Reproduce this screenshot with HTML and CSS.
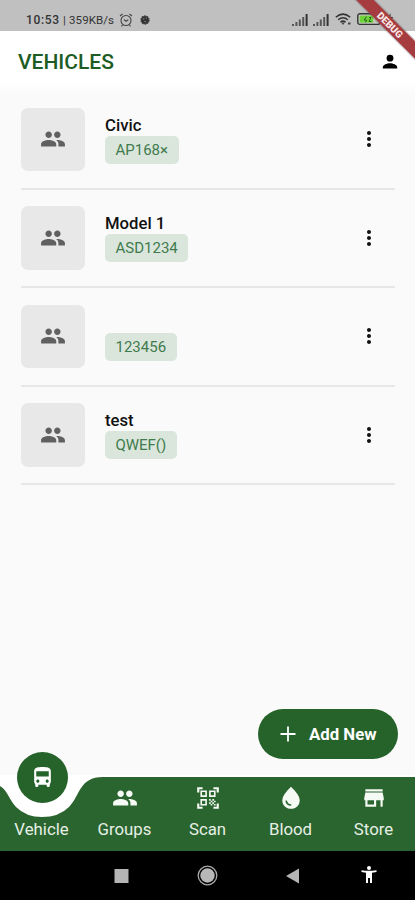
FILE: index.html
```html
<!DOCTYPE html>
<html lang="en">
<head>
<meta charset="utf-8">
<title>Vehicles</title>
<link rel="stylesheet" href="styles.css">
</head>
<body>
<svg class="defs" width="0" height="0">
  <symbol id="people" viewBox="0 0 24 24"><path d="M16 11c1.66 0 2.99-1.34 2.99-3S17.66 5 16 5c-1.66 0-3 1.34-3 3s1.34 3 3 3zm-8 0c1.66 0 2.99-1.34 2.99-3S9.66 5 8 5C6.34 5 5 6.34 5 8s1.34 3 3 3zm0 2c-2.33 0-7 1.17-7 3.5V19h14v-2.5c0-2.33-4.67-3.5-7-3.5zm8 0c-.29 0-.62.02-.97.05 1.16.84 1.97 1.97 1.97 3.45V19h6v-2.5c0-2.33-4.67-3.5-7-3.5z"/></symbol>
  <symbol id="more" viewBox="0 0 24 24"><path d="M12 8c1.1 0 2-.9 2-2s-.9-2-2-2-2 .9-2 2 .9 2 2 2zm0 2c-1.1 0-2 .9-2 2s.9 2 2 2 2-.9 2-2-.9-2-2-2zm0 6c-1.1 0-2 .9-2 2s.9 2 2 2 2-.9 2-2-.9-2-2-2z"/></symbol>
  <symbol id="signal" viewBox="0 0 16 12"><path d="M0 10h2v2H0zM3.4 8h2v4h-2zM6.8 5.5h2V12h-2z" opacity=".75"/><path d="M10.2 3h2v9h-2z" opacity=".75"/><path d="M13.6 0h2v12h-2z"/></symbol>
</svg>
<div class="screen">
  <div class="status">
    <span class="time">10:53</span><span class="sep">|</span><span class="speed">359KB/s</span>
    <svg class="alarm" viewBox="0 0 14 14"><g fill="none" stroke="#444" stroke-width="1.1"><circle cx="7" cy="7.5" r="5"/><path d="M1 3l2.6-2M13 3l-2.6-2M5 6.5l2 1.8 2.3-1.5M3.5 12l-1 1.3M10.5 12l1 1.3"/></g></svg>
    <svg class="gear" viewBox="0 0 10 10"><circle cx="5" cy="5" r="4" fill="#333" stroke="#444" stroke-width="1.4" stroke-dasharray="1.6 .9"/><path d="M3 4h1.4M5.8 3.2h1M4.4 6.5h1.5" stroke="#999" stroke-width=".9"/></svg>
    <span class="grow"></span>
    <svg class="sig" viewBox="0 0 16 12"><use href="#signal"/></svg>
    <svg class="sig second" viewBox="0 0 16 12"><use href="#signal"/></svg>
    <svg class="wifi" viewBox="0 0 17 13"><g fill="none" stroke="#333" stroke-width="1.5"><path d="M.8 4.2Q8 -2 15.2 4.2M3.2 6.8Q8 2.6 12.8 6.8M5.4 9.2Q8 7 10.6 9.2"/></g><path d="M6.2 9.6h3.6L8 12zM13 9.5h2.5v2H13z" fill="#444"/></svg>
    <svg class="battery" viewBox="0 0 36 13"><rect x=".8" y=".8" width="22" height="10.6" rx="2" fill="#c5c9c0" stroke="#333" stroke-width="1.4"/><path d="M2.7 2.6h13.5V9.6H2.7z" fill="#6fd43a"/><path d="M9.5 3.5L7.2 7h2.4L8.5 9.5M12 4.5h2L12 8.5h2.5" fill="none" stroke="#2b6420"/><path d="M34 0l-4 6h3l-1 5 4-7h-3l1-4z" fill="#222"/></svg>
  </div>
  <svg class="debug" viewBox="0 0 72 72"><path d="M14-8L80 58" stroke="#555" stroke-opacity=".25" stroke-width="15"/><path d="M14-8L80 58" stroke="#a63c40" stroke-width="12.5"/><text transform="translate(47 25) rotate(45)" text-anchor="middle" y="3.6">DEBUG</text></svg>
  <header class="appbar">
    <h1>VEHICLES</h1>
    <svg class="person" viewBox="0 0 16 16"><circle cx="8" cy="4.2" r="3.4"/><path d="M.8 14.5v-1.2c0-2.4 4.2-4 7.2-4s7.2 1.6 7.2 4v1.2z"/></svg>
  </header>
  <main class="list">
    <article class="row"><div class="tile"><svg><use href="#people"/></svg></div><div class="info"><h2>Civic</h2><span class="plate">AP168×</span></div><svg class="more"><use href="#more"/></svg></article>
    <article class="row"><div class="tile"><svg><use href="#people"/></svg></div><div class="info"><h2>Model 1</h2><span class="plate">ASD1234</span></div><svg class="more"><use href="#more"/></svg></article>
    <article class="row"><div class="tile"><svg><use href="#people"/></svg></div><div class="info"><h2></h2><span class="plate">123456</span></div><svg class="more"><use href="#more"/></svg></article>
    <article class="row"><div class="tile"><svg><use href="#people"/></svg></div><div class="info"><h2>test</h2><span class="plate">QWEF()</span></div><svg class="more"><use href="#more"/></svg></article>
  </main>
  <button class="add"><svg viewBox="0 0 16 16"><path d="M8 .5v15M.5 8h15" stroke="#fff" stroke-width="1.8"/></svg><span>Add New</span></button>
  <nav class="nav">
    <svg class="navbg" viewBox="0 0 415 76"><path d="M0 0h415v76H0z" fill="#fff"/><path d="M0 11C7 15 9 24 16 32Q26 42 42 42Q59 42 69 32C80 21 79 2 103 2H415V76H0z" fill="#2a642e"/></svg>
    <div class="bubble"><svg viewBox="0 0 24 24"><path d="M4 16c0 .88.39 1.67 1 2.22V20c0 .55.45 1 1 1h1c.55 0 1-.45 1-1v-1h8v1c0 .55.45 1 1 1h1c.55 0 1-.45 1-1v-1.78c.61-.55 1-1.34 1-2.22V6c0-3.5-3.58-4-8-4s-8 .5-8 4v10zm3.5 1c-.83 0-1.5-.67-1.5-1.5S6.67 14 7.5 14s1.5.67 1.5 1.5S8.33 17 7.5 17zm9 0c-.83 0-1.5-.67-1.5-1.5s.67-1.5 1.5-1.5 1.5.67 1.5 1.5-.67 1.5-1.5 1.5zm1.5-6H6V6h12v5z"/></svg></div>
    <a class="item"><span class="ico"></span><span>Vehicle</span></a>
    <a class="item"><svg class="ico"><use href="#people"/></svg><span>Groups</span></a>
    <a class="item"><svg class="ico" viewBox="0 0 24 24"><path d="M9.5 6.5v3h-3v-3h3M11 5H5v6h6V5zm-1.5 9.5v3h-3v-3h3M11 13H5v6h6v-6zm6.5-6.5v3h-3v-3h3M19 5h-6v6h6V5zm-6 8h1.500v1.500H13V13zm1.500 1.500H16V16h-1.500v-1.500zM16 13h1.500v1.500H16V13zm-3 3h1.500v1.500H13V16zm1.500 1.500H16V19h-1.500v-1.500zM16 16h1.500v1.500H16V16zm1.500-1.500H19V16h-1.500v-1.500zm0 3H19V19h-1.500v-1.500zM22 7h-2V4h-3V2h5v5zm0 15v-5h-2v3h-3v2h5zM2 22h5v-2H4v-3H2v5zM2 2v5h2V4h3V2H2z"/></svg><span>Scan</span></a>
    <a class="item"><svg class="ico" viewBox="0 0 24 24"><path d="M12 1.500C7 6.600 4 10.200 4 14.200C4 18.800 7.500 22 12 22s8-3.200 8-7.800C20 10.200 17 6.600 12 1.500z"/><path d="M7.500 14.500c.4 2.700 2.300 4 4.700 4" fill="none" stroke="#2a642e" stroke-width="1.500"/></svg><span>Blood</span></a>
    <a class="item"><svg class="ico" viewBox="0 0 24 24"><path d="M20 4H4v2h16V4zm1 10v-2l-1-5H4l-1 5v2h1v6h10v-6h4v6h2v-6h1zm-9 4H6v-4h6v4z"/></svg><span>Store</span></a>
  </nav>
  <footer class="sys">
    <svg viewBox="0 0 24 24"><path d="M5.500 5h14v14h-14z" fill="#b5b5b5"/></svg>
    <svg viewBox="0 0 24 24"><circle cx="12.500" cy="11.500" r="9.300" fill="none" stroke="#aaa" stroke-width="1.300"/><circle cx="12.500" cy="11.500" r="7.200" fill="#b8b8b8"/></svg>
    <svg viewBox="0 0 24 24"><path d="M5 12L18 4.500v15z" fill="#b5b5b5"/></svg>
    <svg viewBox="0 0 24 24"><circle cx="12" cy="4" r="2" fill="#fff"/><path d="M4.500 6.200Q12 7.500 19.500 6.200V8L15 8.800V19h-2v-5h-2v5H9V8.800L4.500 8z" fill="#fff"/></svg>
  </footer>
</div>
</body>
</html>
```
FILE: styles.css
```css
* { box-sizing: border-box; margin: 0; }
body { font-family: Roboto, "Liberation Sans", sans-serif; background: #fafafa; }
.defs { position: absolute; }
svg { display: block; flex: none; }
.screen { position: relative; width: 415px; height: 900px; display: flex; flex-direction: column; overflow: hidden; background: #fafafa; }
.status { height: 31px; background: #c0c0c0; display: flex; align-items: center; padding: 8px 22px 0 26px; color: #333; font-size: 11.5px; }
.time { font-size: 12px; font-weight: 500; letter-spacing: .65px; width: 37px; }
.sep { width: 6px; }
.speed { letter-spacing: .1px; width: 50px; white-space: nowrap; }
.alarm { width: 14px; height: 14px; }
.gear { width: 10px; height: 10px; margin-left: 7px; }
.grow { flex: 1; }
.sig { width: 16px; height: 12px; fill: #333; }
.second { margin-left: 5px; }
.wifi { width: 17px; height: 13px; margin-left: 6px; }
.battery { width: 36px; height: 13px; margin-left: 5px; }
.debug { position: absolute; top: 0; right: 0; width: 72px; height: 72px; }
.debug text { font-size: 10px; font-weight: 900; fill: #f8e6e6; }
.appbar { height: 65px; background: linear-gradient(#fff 75%, #fafafa); display: flex; align-items: center; justify-content: space-between; padding: 0 17px 4px 18px; }
.appbar h1 { font-size: 21px; line-height: 25px; font-weight: 500; color: #1d5c24; padding-top: 1px; }
.person { width: 16px; height: 16px; }
.list { flex: 1; padding: 11.5px 20px 0 21px; }
.row { height: 98.5px; display: flex; align-items: flex-start; position: relative; }
.row::after { content: ""; position: absolute; left: 0; right: 0; top: 80px; height: 2px; background: #e7e7e7; }
.tile { width: 64px; height: 63.5px; border-radius: 7px; background: #e8e8e8; display: flex; align-items: center; justify-content: center; }
.tile svg { width: 26px; height: 26px; fill: #606060; }
.info { flex: 1; margin-left: 20px; padding-top: 8px; }
.info h2 { height: 20px; font-size: 16.7px; line-height: 19px; font-weight: 500; color: #111; }
.plate { display: inline-block; height: 28px; padding: 0 10.5px; border-radius: 5px; background: #dae6dc; color: #3f7b4d; font-size: 15px; line-height: 28px; vertical-align: top; }
.more { width: 24px; height: 24px; margin: 19.5px 14px 0 0; fill: #111; }
.add { align-self: flex-end; width: 140px; height: 50px; margin: 0 17px 16px 0; padding: 0 0 0 22px; border: 0; border-radius: 25px; background: #26632a; display: flex; align-items: center; gap: 13px; color: #fff; font: 700 16.8px Roboto, sans-serif; }
.add svg { width: 16px; height: 16px; }
.nav { position: relative; height: 76px; display: grid; grid-template-columns: repeat(5, 1fr); }
.navbg { position: absolute; left: 0; top: 0; width: 415px; height: 76px; }
.bubble { position: absolute; left: 16.5px; top: -23px; width: 51px; height: 51px; border-radius: 50%; background: #26632a; display: flex; align-items: center; justify-content: center; }
.bubble svg { width: 25px; height: 25px; fill: #fff; }
.item { position: relative; display: flex; flex-direction: column; align-items: center; padding-top: 10px; color: #e6f0e6; font-size: 16.8px; line-height: 20px; }
.ico { width: 26px; height: 26px; fill: #f5faf5; margin-bottom: 8px; }
.sys { height: 49px; background: #000; display: flex; align-items: center; gap: 62px; padding-left: 109px; }
.sys svg { width: 24px; height: 24px; }
.sys svg:last-child { margin-left: -10px; }
```
